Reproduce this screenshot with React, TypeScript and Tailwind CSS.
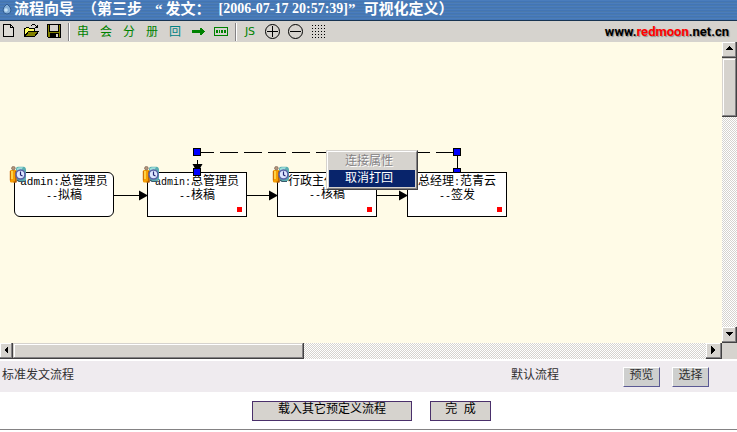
import type { ReactNode } from "react";

type Direction = "up" | "down" | "left" | "right";

const arrowPoints: Record<Direction, string> = {
  up: "4,1 8,5 0,5",
  down: "0,2 8,2 4,6",
  left: "2,4 6,0 6,8",
  right: "6,4 2,0 2,8",
};

function ScrollButton({ direction, className }: { direction: Direction; className: string }) {
  return (
    <button
      type="button"
      aria-label={`Scroll ${direction}`}
      className={`flex shrink-0 items-center justify-center border-r border-b border-[#424142] ${className}`}
    >
      <span className="flex h-full w-full items-center justify-center border-r border-b border-r-[#848284] border-b-[#848284] bg-[#d6d3ce] shadow-[inset_1px_1px_0_#fff]">
        <svg width="8" height="8" viewBox="0 0 8 8" shapeRendering="crispEdges">
          <polygon points={arrowPoints[direction]} />
        </svg>
      </span>
    </button>
  );
}

function Thumb({ className }: { className: string }) {
  return (
    <div className={`shrink-0 border-r border-b border-[#424142] bg-[#d6d3ce] ${className}`}>
      <div className="h-full w-full border border-t-[#d6d3ce] border-r-[#848284] border-b-[#848284] border-l-[#d6d3ce] shadow-[inset_1px_1px_0_#fff]" />
    </div>
  );
}

function Tool({ label, children, className = "" }: { label: string; children: ReactNode; className?: string }) {
  return (
    <button
      type="button"
      aria-label={label}
      className={`flex h-4 w-4 shrink-0 items-center justify-center text-xs leading-4 text-[#008200] ${className}`}
    >
      {children}
    </button>
  );
}

function Separator() {
  return <div className="mr-[5px] ml-[6px] h-[18px] w-[2px] shrink-0 border-r border-l border-r-white border-l-[#848284]" />;
}

function Toolbar() {
  return (
    <div className="flex h-[21px] items-center bg-[#d6d3ce]">
      <div className="flex gap-[7px]">
        <Tool label="新建">
          <svg width="16" height="16" viewBox="0 0 16 16" shapeRendering="crispEdges" fill="none" stroke="#000">
            <path d="M3.5 0.5H10.5L13.5 3.5V12.5H3.5Z" fill="#dedbd6" />
            <path d="M10.5 0.5V3.5H13.5" />
          </svg>
        </Tool>
        <Tool label="打开">
          <svg width="16" height="16" viewBox="0 0 16 16" shapeRendering="crispEdges">
            <path d="M1.5 12.5V4.5H2.5L3.5 3.5H5.5L6.5 4.5H11.5V7.5" fill="#ffff63" stroke="#000" />
            <path d="M1.5 12.5L5.5 7.5H15.5L11.5 12.5Z" fill="#848200" stroke="#000" />
            <path d="M8 1.5H9M9 0.5H12M12 1.5H13M13 2.5H15M12 3.5H15M14.5 1V4" stroke="#000" fill="none" />
          </svg>
        </Tool>
        <Tool label="保存">
          <svg width="16" height="16" viewBox="0 0 16 16" shapeRendering="crispEdges">
            <path d="M1.5 0.5H14.5V13.5H2.5L1.5 12.5Z" fill="#848200" stroke="#000" />
            <path d="M4 1H12V7H4Z" fill="#d6d3ce" />
            <path d="M3.5 1V7.5H12.5V1" stroke="#000" fill="none" />
            <path d="M4 9H13V14H4Z" />
            <path d="M10 10H12V13H10Z" fill="#d6d3ce" />
          </svg>
        </Tool>
      </div>
      <Separator />
      <div className="flex gap-[7px]">
        <Tool label="串">串</Tool>
        <Tool label="会">会</Tool>
        <Tool label="分">分</Tool>
        <Tool label="册">册</Tool>
        <Tool label="回" className="text-[#008284]">回</Tool>
        <Tool label="连线">
          <svg width="14" height="10" viewBox="0 0 14 10" shapeRendering="crispEdges">
            <path d="M1 3H9V1H10L14 4.5L10 8H9V6H1Z" fill="#008200" />
          </svg>
        </Tool>
        <Tool label="节点">
          <svg width="14" height="10" viewBox="0 0 14 10" shapeRendering="crispEdges">
            <rect x="0.5" y="0.5" width="13" height="8" fill="none" stroke="#008200" />
            <path d="M2 3H4V6H2ZM5 3H6V6H5ZM7 3H9V6H7ZM10 3H12V6H10Z" fill="#008200" />
          </svg>
        </Tool>
      </div>
      <Separator />
      <div className="flex gap-[7px]">
        <Tool label="JS">
          <span className="font-['DejaVu_Sans',sans-serif] text-[11px]">JS</span>
        </Tool>
        <Tool label="放大">
          <svg width="16" height="16" viewBox="0 0 16 16" fill="none" stroke="#000">
            <circle cx="7.5" cy="7.5" r="7" />
            <path d="M2 7.5H13M7.5 2V13" shapeRendering="crispEdges" />
          </svg>
        </Tool>
        <Tool label="缩小">
          <svg width="16" height="16" viewBox="0 0 16 16" fill="none" stroke="#000">
            <circle cx="7.5" cy="7.5" r="7" />
            <path d="M2 7.5H13" shapeRendering="crispEdges" />
          </svg>
        </Tool>
        <Tool label="网格">
          <svg width="16" height="16" viewBox="0 0 16 16" shapeRendering="crispEdges">
            {[1, 4, 7, 10, 13].map((y) => (
              <path key={y} d={`M1 ${y + 0.5}H15`} stroke="#000" strokeDasharray="1 2" />
            ))}
          </svg>
        </Tool>
      </div>
      <a
        href="#home"
        className="mr-2 ml-auto font-['Roboto',sans-serif] text-[13px] leading-4 font-bold text-black [text-shadow:1px_1px_1px_#8c8c8c]"
      >
        www.<span className="text-[#f00]">redmoon</span>.net.cn
      </a>
    </div>
  );
}

function UserClock() {
  return (
    <svg className="absolute -top-[7px] -left-[6px]" width="18" height="18" viewBox="0 0 18 18">
      <path d="M7 3Q7 0.8 9 0.8H14.5Q17 1 17 4V12Q17 15 15 15H8Z" fill="#5aaeb0" />
      <path d="M8 2.5Q9 1.3 11 1.3H14L12 4.5H8Z" fill="#9cdfdb" />
      <rect x="1" y="4" width="6.5" height="12.5" rx="1.2" fill="#f79e00" />
      <path d="M7 5V16H4.5" fill="none" stroke="#9c4500" strokeWidth="1.2" />
      <path d="M1.3 5V14.5" stroke="#c66500" />
      <path d="M3 5V13" stroke="#ffdf5a" strokeWidth="1.6" />
      <circle cx="4.4" cy="2.2" r="1.8" fill="#b5967b" stroke="#6b5142" strokeWidth="0.6" />
      <circle cx="11.5" cy="8.5" r="4.5" fill="#dee7ff" stroke="#5a61a5" strokeWidth="1.6" />
      <path d="M11.5 5.5V9L13.5 10" fill="none" stroke="#212473" strokeWidth="1.2" />
      <path d="M8 14L10 15.5H15" fill="none" stroke="#39596b" strokeWidth="1.2" />
    </svg>
  );
}

type NodeProps = { name: ReactNode; action: string; place: string; icon?: boolean; first?: boolean; align?: string };

function FlowNode({ name, action, place, icon = false, first = false, align = "text-center" }: NodeProps) {
  return (
    <div
      className={`absolute top-[172px] h-[45px] w-[100px] border border-black bg-white text-xs whitespace-nowrap ${first ? "rounded-md" : ""} ${place}`}
    >
      <div className={`pt-[2px] leading-[13px] ${align}`}>{name}</div>
      <div className="text-center leading-[13px]">
        <Mono>--</Mono>
        {action}
      </div>
      {!first && <span className="absolute right-1 bottom-1 h-[5px] w-[5px] bg-[#f00]" />}
      {icon && <UserClock />}
    </div>
  );
}

function Mono({ children, size = "text-[10px]" }: { children: ReactNode; size?: string }) {
  return <span className={`font-['Liberation_Mono',monospace] ${size}`}>{children}</span>;
}

function Handle({ place }: { place: string }) {
  return <span className={`absolute h-2 w-2 border border-black bg-[#00f] ${place}`} />;
}

function Canvas() {
  return (
    <div className="relative min-w-0 flex-1 overflow-hidden bg-[#fffbe7]">
      <div className="absolute -top-[42px] left-0">
        <svg className="absolute top-0 left-0" width="520" height="230" viewBox="0 0 520 230">
          <g stroke="#000" shapeRendering="crispEdges" fill="none">
            <path d="M114 195.5H140M247 195.5H270M377 195.5H400" />
            <path d="M196 152.5H457" strokeDasharray="18 6" />
            <path d="M457.5 152V172M197.5 160V166" />
          </g>
          <path d="M139 190.5L148 195.5L139 200.5ZM269 190.5L278 195.5L269 200.5ZM399 190.5L408 195.5L399 200.5ZM192.5 164L197.5 173L202.5 164Z" />
        </svg>
        <Handle place="left-[453px] top-[168px]" />
        <FlowNode first icon place="left-[14px]" action="拟稿" name={<><Mono size="text-[11px]">admin:</Mono>总管理员</>} />
        <FlowNode icon place="left-[147px]" action="核稿" name={<><Mono>admin:</Mono>总管理员</>} />
        <FlowNode icon place="left-[277px]" action="核稿" align="pl-[10px]" name="行政主任" />
        <FlowNode place="left-[407px]" action="签发" name={<>总经理<Mono>:</Mono>范青云</>} />
        <Handle place="left-[193px] top-[148px]" />
        <Handle place="left-[193px] top-[168px]" />
        <Handle place="left-[453px] top-[148px]" />
        <div
          role="menu"
          className="absolute top-[150px] left-[326px] w-[92px] border border-t-[#d6d3ce] border-r-[#424142] border-b-[#424142] border-l-[#d6d3ce] bg-[#d6d3ce] text-xs leading-[17px]"
        >
          <div className="border border-t-white border-r-[#848284] border-b-[#848284] border-l-white p-px">
            <button type="button" role="menuitem" disabled className="block w-full pl-4 text-left text-[#848284] [text-shadow:1px_1px_0_#fff]">
              连接属性
            </button>
            <button type="button" role="menuitem" className="block w-full bg-[#08246b] pl-4 text-left text-white">
              取消打回
            </button>
          </div>
        </div>
      </div>
    </div>
  );
}

const track = "bg-[repeating-conic-gradient(#fff_0_25%,#d6d3ce_0_50%)] bg-[length:2px_2px]";

export default function App() {
  return (
    <div className="min-w-0 bg-white font-['Liberation_Sans','Noto_Sans_CJK_SC',sans-serif] text-xs text-black">
      <header className="flex h-[21px] items-center border-b border-[#183452] bg-[repeating-linear-gradient(to_bottom,#4a7dbd_0_1px,#4275b5_1px_2px,#4a79ad_2px_3px)] pb-[3px] pl-[2px] font-['Liberation_Serif','Noto_Sans_CJK_SC',serif] text-[15px] leading-4 font-bold whitespace-nowrap text-white">
        <svg className="mr-[2px] shrink-0" width="10" height="12" viewBox="0 0 10 12">
          <path d="M5 1Q9 4 9 7A4 4 0 0 1 1 7Q1 4 5 1Z" fill="#84aed6" stroke="#315d94" />
          <circle cx="4" cy="7" r="1.8" fill="#c6e3f7" />
        </svg>
        <h1 className="flex">
          <span className="w-[68px]">流程向导</span>
          <span className="w-[73px]">（第三步</span>
          <span>“</span>
          <span className="ml-[3px] w-[53px]">发文：</span>
          <span className="text-sm leading-4">[2006-07-17 20:57:39]</span>
          <span className="mr-2">”</span>
          <span>可视化定义）</span>
        </h1>
      </header>
      <Toolbar />
      <main>
        <div className="flex h-[301px]">
          <Canvas />
          <div className={`flex w-[15px] shrink-0 flex-col ${track}`}>
            <ScrollButton direction="up" className="h-4 w-[15px]" />
            <Thumb className="h-[59px] w-[15px]" />
            <div className="flex-1" />
            <ScrollButton direction="down" className="h-4 w-[15px]" />
          </div>
        </div>
        <div className={`flex h-4 ${track}`}>
          <ScrollButton direction="left" className="h-4 w-[13px]" />
          <Thumb className="h-4 w-[291px]" />
          <div className="flex-1" />
          <ScrollButton direction="right" className="h-4 w-4" />
          <div className="w-[15px] shrink-0 bg-[#d6d3ce]" />
        </div>
        <div className="mt-[2px] flex h-[31px] items-center bg-[#efebef] pr-7 pl-[2px] text-[#313031]">
          <span className="mb-1 flex-1">标准发文流程</span>
          <span className="mb-1 w-28">默认流程</span>
          <div className="flex gap-3">
            {["预览", "选择"].map((text) => (
              <button
                key={text}
                type="button"
                className="h-5 w-[37px] border border-t-white border-r-[#5a5994] border-b-[#5a5994] border-l-white bg-[#cecfce] pb-1 leading-[14px]"
              >
                {text}
              </button>
            ))}
          </div>
        </div>
      </main>
      <footer className="flex justify-center gap-[18px] border-b border-[#848284] pt-[9px] pb-2 pl-[6px]">
        <button type="button" className="h-5 w-40 border border-[#4a306b] bg-[#d6d3ce] pb-1 leading-[14px]">
          载入其它预定义流程
        </button>
        <button type="button" className="h-5 w-[61px] border border-[#4a306b] bg-[#d6d3ce] pb-1 leading-[14px]">
          完&nbsp;&nbsp;成
        </button>
      </footer>
    </div>
  );
}
